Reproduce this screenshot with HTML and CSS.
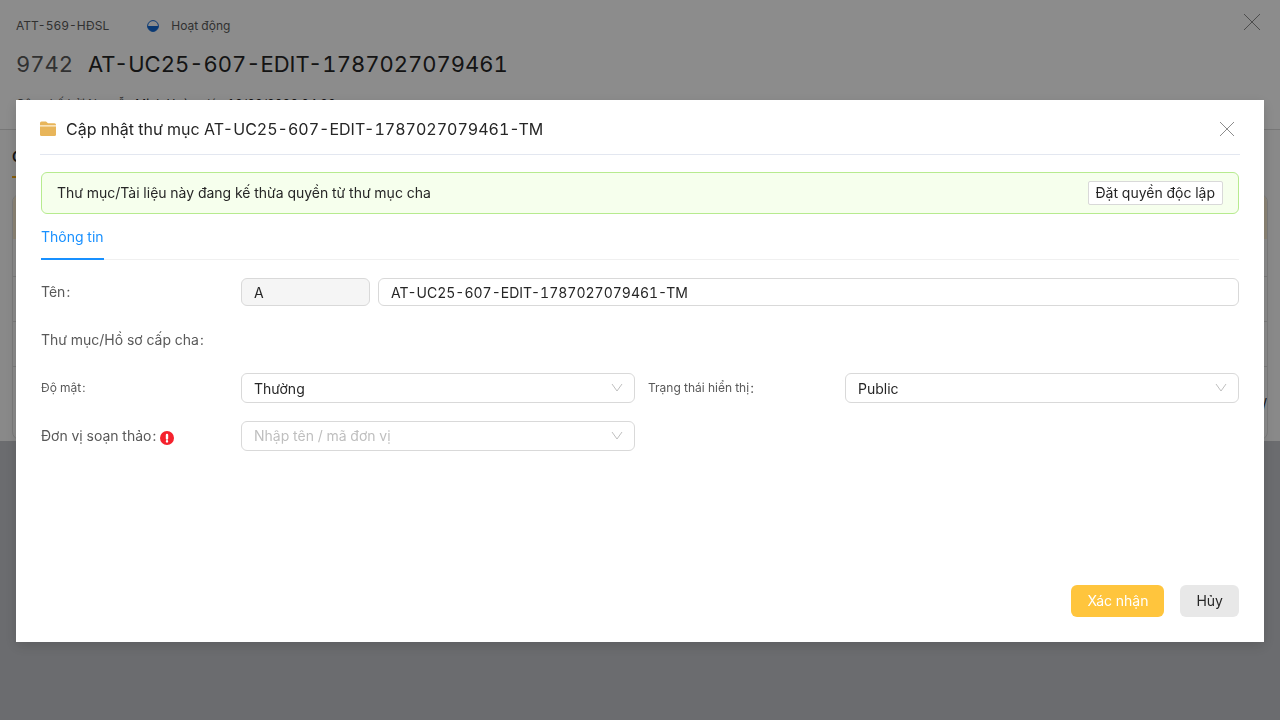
FILE: index.html
```html
<!DOCTYPE html>
<html lang="vi">
<head>
<meta charset="utf-8">
<meta name="viewport" content="width=device-width, initial-scale=1">
<title>Cập nhật thư mục</title>
<link rel="stylesheet" href="styles.css">
</head>
<body>
<div class="page">
  <div class="record">
    <header class="record-head">
      <div class="record-meta">
        <span>ATT-569-HĐSL</span>
        <span class="status">
          <svg class="status-icon" viewBox="0 0 12 12" aria-hidden="true"><circle cx="6" cy="6" r="5.4" fill="#fff" stroke="#1268d3" stroke-width="1"/><path d="M.6 6h10.800a5.400 5.400 0 0 1-10.800 0z" fill="#1268d3"/></svg>
          Hoạt động
        </span>
        <button class="icon-button record-close" type="button" aria-label="Đóng hồ sơ"><svg class="record-cross" viewBox="0 0 18 18"><path d="M1 1l16 16M17 1L1 17"/></svg></button>
      </div>
      <h1 class="record-title"><span class="record-number">9742</span><span>AT-UC25-607-EDIT-1787027079461</span></h1>
      <p class="record-log">Công bố bởi Nguyễn <span class="strong">Minh Hoàng</span> lúc <span class="strong">18/08/2026 04:38</span></p>
    </header>
    <div class="record-body">
      <div class="record-tabs"><span class="record-tab">Chi tiết</span></div>
      <div class="record-table">
        <div class="table-head"></div>
        <div class="table-row"></div>
        <div class="table-row"></div>
        <div class="table-row"></div>
        <div class="table-row table-last">/</div>
      </div>
    </div>
  </div>
</div>

<div class="mask">
  <section class="modal" role="dialog" aria-modal="true" aria-labelledby="modal-title">
    <header class="modal-head">
      <svg class="folder" viewBox="0 0 16 16" aria-hidden="true"><path d="M0 2A1.500 1.500 0 0 1 1.500.5H6L8 2.200h6.500A1.500 1.500 0 0 1 16 3.700V5H0z" fill="#e8b55a"/><path d="M0 4h16v1.500H0z" fill="#fae3b8"/><path d="M0 5.500h16v8a1.500 1.500 0 0 1-1.500 1.500h-13A1.500 1.500 0 0 1 0 13.500z" fill="#e8b55a"/></svg>
      <h2 class="modal-title" id="modal-title">Cập nhật thư mục AT-UC25-607-EDIT-1787027079461-TM</h2>
      <button class="icon-button" type="button" aria-label="Đóng"><svg class="modal-cross" viewBox="0 0 16 16"><path d="M1 1l14 14M15 1L1 15"/></svg></button>
    </header>
    <form class="modal-body">
      <div class="notice">
        <span>Thư mục/Tài liệu này đang kế thừa quyền từ thư mục cha</span>
        <button class="small-button" type="button">Đặt quyền độc lập</button>
      </div>
      <div class="tabs" role="tablist"><button class="tab" type="button" role="tab" aria-selected="true">Thông tin</button></div>
      <div class="fields">
        <div class="field wide">
          <label class="label" for="name">Tên<span class="colon">:</span></label>
          <div class="name-inputs">
            <input class="input prefix" aria-label="Tiền tố" value="A" disabled>
            <input class="input" id="name" value="AT-UC25-607-EDIT-1787027079461-TM">
          </div>
        </div>
        <div class="field wide"><span class="label">Thư mục/Hồ sơ cấp cha<span class="colon">:</span></span></div>
        <div class="field">
          <label class="label small" for="secrecy">Độ mật<span class="colon">:</span></label>
          <div class="select-wrap"><select class="select" id="secrecy"><option>Thường</option></select><svg class="arrow" viewBox="0 0 12 12"><path d="M1 2l5 7 5-7"/></svg></div>
        </div>
        <div class="field second">
          <label class="label" for="visibility"><span class="small">Trạng thái hiển thị</span><span class="colon">:</span></label>
          <div class="select-wrap"><select class="select" id="visibility"><option>Public</option></select><svg class="arrow" viewBox="0 0 12 12"><path d="M1 2l5 7 5-7"/></svg></div>
        </div>
        <div class="field">
          <label class="label" for="unit">Đơn vị soạn thảo<span class="colon">:</span>
            <svg class="alert" viewBox="0 0 14 14" aria-hidden="true"><circle cx="7" cy="7" r="7" fill="#f5222d"/><path d="M7 4v3.500M7 10.200v.2" stroke="#fff" stroke-width="2.400" stroke-linecap="round"/></svg></label>
          <div class="select-wrap"><select class="select empty" id="unit"><option>Nhập tên / mã đơn vị</option></select><svg class="arrow" viewBox="0 0 12 12"><path d="M1 2l5 7 5-7"/></svg></div>
        </div>
      </div>
      <footer class="actions">
        <button class="button primary" type="submit">Xác nhận</button>
        <button class="button" type="button">Hủy</button>
      </footer>
    </form>
  </section>
</div>
</body>
</html>
```

FILE: styles.css
```css
* { box-sizing: border-box; }
body {
  margin: 0;
  font: 14px/22px Inter, "Noto Sans", sans-serif;
  font-feature-settings: "tnum";
  color: #262626;
}
button, input, select { font: inherit; font-feature-settings: inherit; color: inherit; }
h1, h2, p { margin: 0; font-weight: 400; }

.page { min-height: 100vh; background: #c3c5ca; overflow: hidden; }
.record { background: #fff; }
.record-head { height: 130px; padding: 12px 16px 0; border-bottom: 1px solid #d9d9d9; }
.record-meta { display: flex; align-items: center; gap: 38px; height: 28px; font-size: 12px; color: #595959; }
.status { display: flex; align-items: center; gap: 12px; }
.status-icon { width: 12px; height: 12px; }
.record-close { margin-left: auto; align-self: flex-start; }
.record-title { display: flex; gap: 15px; margin-top: 8px; font-size: 22px; line-height: 32px; }
.record-number { color: #595959; }
.record-log { margin-top: 14px; font-size: 12px; line-height: 20px; color: #595959; }
.strong { color: #262626; }
.record-body { padding: 0 12px 1px; background: #fafafa; }
.record-tabs { height: 48px; line-height: 54px; }
.record-tab { display: inline-block; height: 48px; border-bottom: 2px solid #faad14; font-weight: 600; }
.record-table { margin-top: 16px; border: 1px solid #e0e0e0; border-radius: 8px; background: #fff; overflow: hidden; }
.table-head { height: 44px; background: #fff1d6; }
.table-row { height: 45px; border-bottom: 1px solid #e0e0e0; }
.table-head + .table-row { height: 38px; }
.table-last { height: 72px; padding-top: 26px; border: 0; text-align: right; }

.icon-button { display: flex; padding: 0; border: 0; background: none; }
.icon-button svg { fill: none; stroke: #8c8c8c; stroke-width: 1; }
.record-cross { width: 18px; height: 18px; margin: 1px 3px 0 0; }
.modal-cross { width: 16px; height: 16px; margin-right: 5px; }

.mask { position: fixed; inset: 0; padding: 100px 16px 16px; background: rgba(0, 0, 0, .45); overflow: auto; }
.modal { padding: 0 24px 25px; background: #fff; box-shadow: 0 4px 12px rgba(0, 0, 0, .15); }
.modal-head { display: flex; align-items: center; gap: 10px; height: 55px; padding-top: 3px; border-bottom: 1px solid #e3e7f0; }
.folder { width: 16px; height: 16px; }
.modal-title { flex: 1; font-size: 16px; line-height: 24px; }
.modal-body { padding: 17px 1px 0; }
.notice { display: flex; align-items: center; justify-content: space-between; height: 42px; padding: 0 15px; border: 1px solid #b7eb8f; border-radius: 6px; background: #f6ffed; }
.small-button { height: 24px; padding: 0 7px; border: 1px solid #d9d9d9; border-radius: 2px; background: #fff; line-height: 22px; }
.tabs { height: 46px; border-bottom: 1px solid #f0f0f0; }
.tab { height: 46px; padding: 2px 0 0; border: 0; border-bottom: 2px solid #1890ff; background: none; color: #1890ff; }
.fields { display: grid; grid-template-columns: calc(50% - 5px) 1fr; padding-top: 8px; }
.field { display: grid; grid-template-columns: 200px 1fr; align-items: center; height: 48px; }
.second { grid-template-columns: 197px 1fr; padding-left: 13px; }
.wide { grid-column: 1 / -1; }
.label { display: flex; align-items: center; color: #595959; }
.small { font-size: 12px; }
.colon { margin-left: 1px; }
.alert { width: 14px; height: 14px; margin: 3px 0 0 4px; }
.name-inputs { display: grid; grid-template-columns: 129px 1fr; gap: 8px; }
.input { width: 100%; height: 28px; padding: 1px 12px 0; border: 1px solid #d9d9d9; border-radius: 6px; background: #fff; }
.prefix { background: #f5f5f5; }
.select-wrap { position: relative; }
.select { display: block; width: 100%; height: 30px; padding: 2px 12px 0; border: 1px solid #d9d9d9; border-radius: 6px; background: #fff; appearance: none; }
.empty { padding-top: 0; color: #bfbfbf; }
.arrow { position: absolute; top: 9px; right: 12px; width: 12px; height: 12px; fill: none; stroke: #bfbfbf; pointer-events: none; }
.actions { display: flex; justify-content: flex-end; gap: 16px; margin-top: 125px; }
.button { height: 32px; padding: 0 16px; border: 0; border-radius: 6px; background: #e8e8e8; }
.primary { background: #ffc53d; color: #fff; }
```
